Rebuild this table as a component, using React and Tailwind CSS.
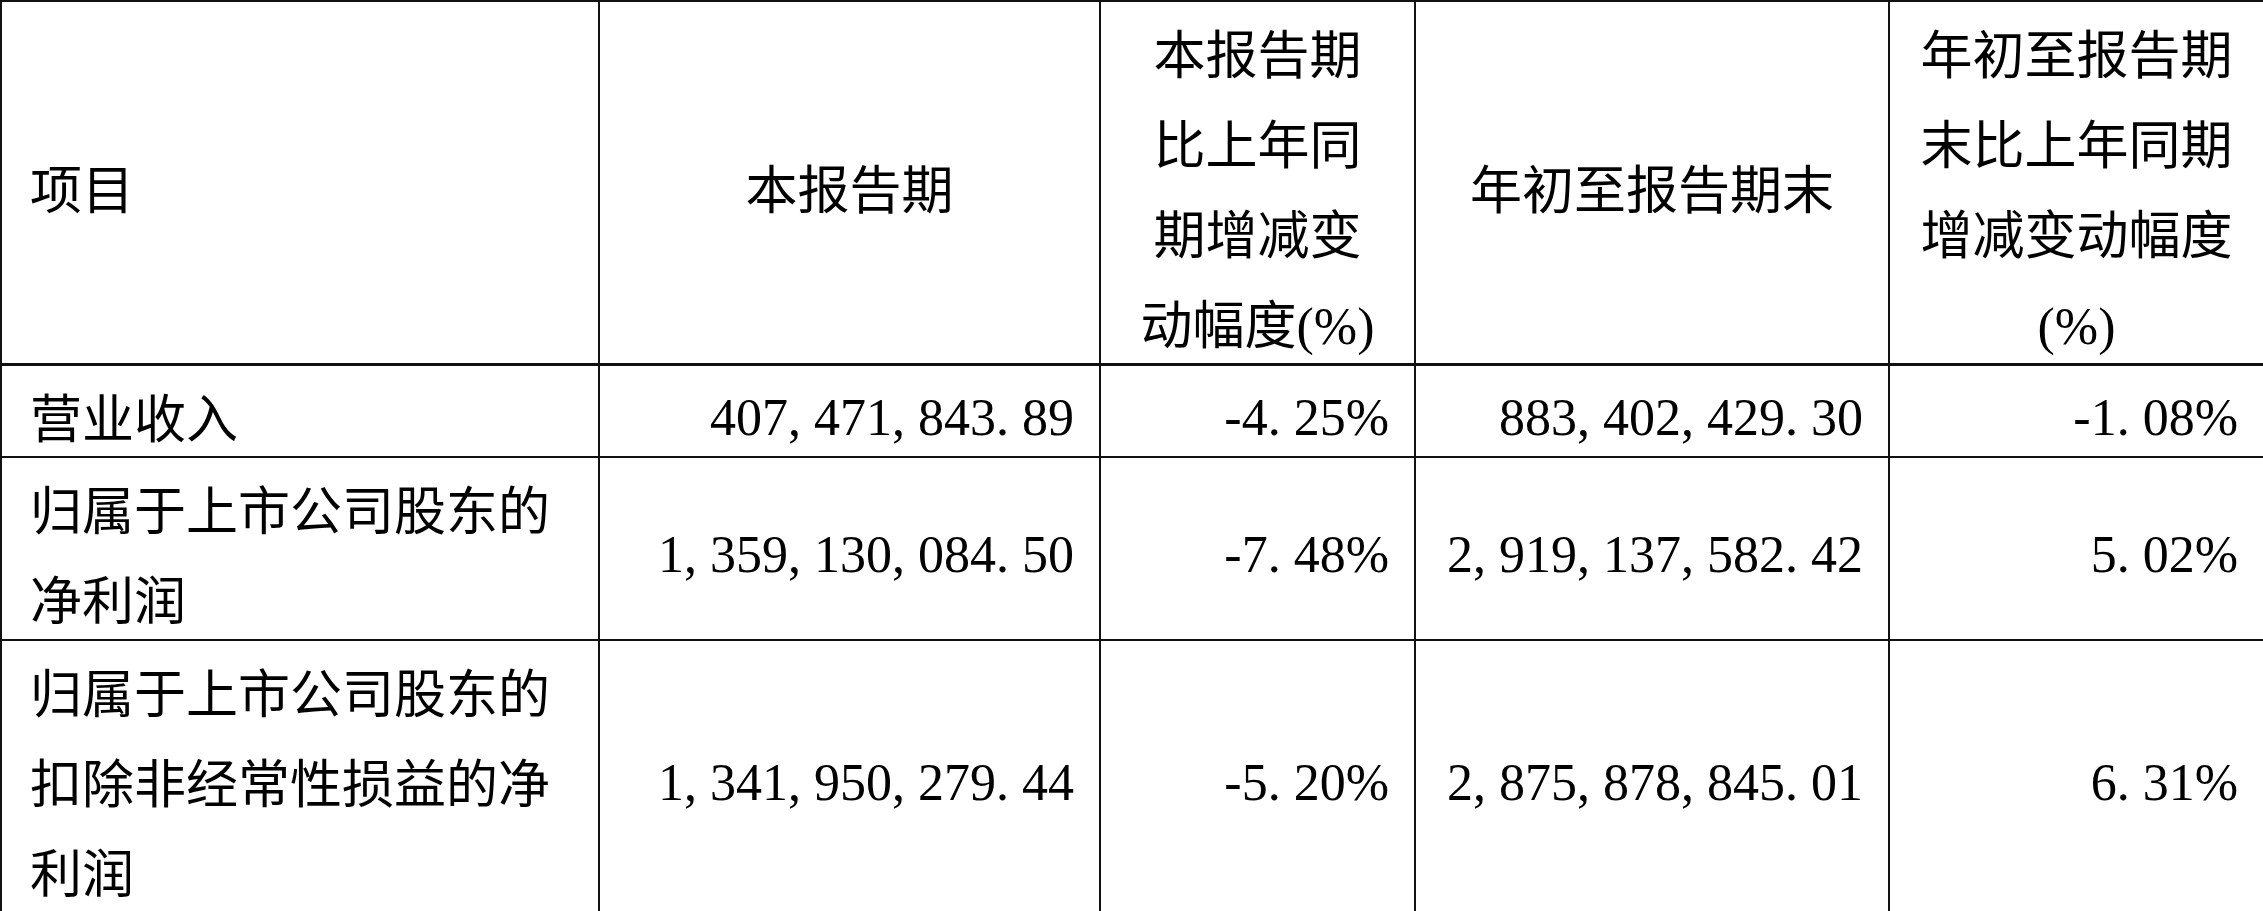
import React from "react";

// Quarterly key financial data table
const rows = [
  {
    label: ["营业收入"],
    height: "h-[92px]",
    values: ["407,471,843.89", "-4.25%", "883,402,429.30", "-1.08%"],
  },
  {
    label: ["归属于上市公司股东的", "净利润"],
    height: "h-[183px]",
    values: ["1,359,130,084.50", "-7.48%", "2,919,137,582.42", "5.02%"],
  },
  {
    label: ["归属于上市公司股东的", "扣除非经常性损益的净", "利润"],
    height: "h-[271px]",
    values: ["1,341,950,279.44", "-5.20%", "2,875,878,845.01", "6.31%"],
  },
];

function Lines({ lines }) {
  return lines.map((l, i) => (
    <React.Fragment key={i}>
      {i > 0 && <br />}
      {l}
    </React.Fragment>
  ));
}

// comma and period take a half-width cell, like the source font
function Num({ text }) {
  return (
    <span className="inline-block translate-y-[7px] whitespace-nowrap">
      {text.split("").map((c, i) =>
        c === "," || c === "." ? (
          <span key={i} className="inline-block w-[26px] text-left">
            {c}
          </span>
        ) : (
          <span key={i}>{c}</span>
        ),
      )}
    </span>
  );
}

export default function App() {
  const cell = "border-2 border-[#111] align-middle";
  const head = cell + " border-b-[3px] text-center";

  return (
    <div className="min-h-screen bg-white">
      <table className="w-[2263px] table-fixed border-collapse text-[52px] leading-[90px] text-black font-['Liberation_Serif','Noto_Sans_CJK_SC',serif]">
        <colgroup>
          <col className="w-[598px]" />
          <col className="w-[501px]" />
          <col className="w-[315px]" />
          <col className="w-[474px]" />
          <col className="w-[375px]" />
        </colgroup>
        <thead>
          <tr className="h-[363px]">
            <th className={cell + " border-b-[3px] pl-[28px] text-left font-normal"}>
              <span className="inline-block translate-y-[10px]">项目</span>
            </th>
            <th className={head + " font-normal"}>
              <span className="inline-block translate-y-[10px]">本报告期</span>
            </th>
            <th className={head + " font-normal"}>
              <span className="inline-block translate-y-[10px]">
                <Lines lines={["本报告期", "比上年同", "期增减变", "动幅度(%)"]} />
              </span>
            </th>
            <th className={head + " font-normal"}>
              <span className="inline-block translate-y-[10px]">年初至报告期末</span>
            </th>
            <th className={head + " font-normal"}>
              <span className="inline-block translate-y-[10px]">
                <Lines lines={["年初至报告期", "末比上年同期", "增减变动幅度", "(%)"]} />
              </span>
            </th>
          </tr>
        </thead>
        <tbody>
          {rows.map((r, i) => (
            <tr key={i} className={r.height}>
              <td className={cell + " pl-[28px] text-left"}>
                <span className="inline-block translate-y-[10px]">
                  <Lines lines={r.label} />
                </span>
              </td>
              {r.values.map((v, j) => (
                <td key={j} className={cell + " pr-[25px] text-right"}>
                  <Num text={v} />
                </td>
              ))}
            </tr>
          ))}
        </tbody>
      </table>
    </div>
  );
}
